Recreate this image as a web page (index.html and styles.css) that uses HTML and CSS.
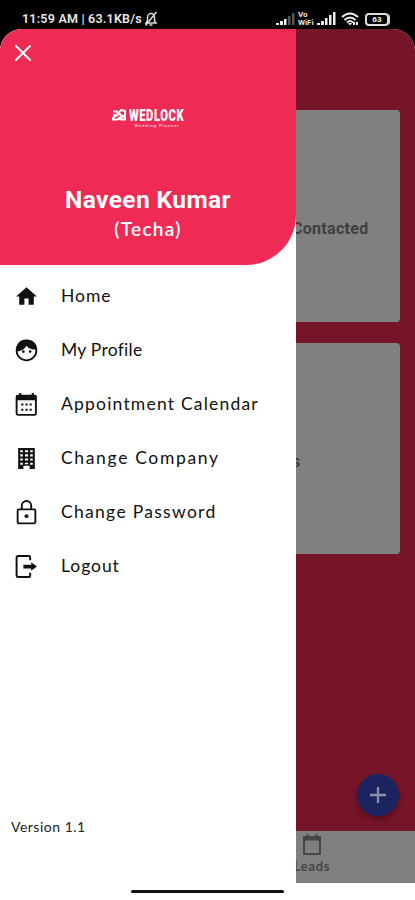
FILE: index.html
```
<!DOCTYPE html>
<html lang="en">
<head>
    <meta charset="UTF-8">
    <meta name="viewport" content="width=device-width, initial-scale=1.0">
    <title>Wedlock</title>
    <link rel="stylesheet" href="styles.css">
</head>
<body>
    <div class="status-bar">
        <span class="status-time">11:59 AM | 63.1KB/s</span>
        <svg class="bell" viewBox="0 0 14 16" width="14" height="16" fill="none" stroke="#ddd" stroke-width="1.5">
            <path d="M2 12h10l-1.5-2V6.500a3.500 4 0 0 0-7 0V10zM5.500 14h3M12.500 1L1.500 14.500"/>
        </svg>
        <div class="status-icons">
            <svg viewBox="0 0 19 14" width="19" height="14" fill="#eee">
                <path d="M0 11h3v2H0zM4 9h3v4H4zM8 7h2.500v6H8z"/>
                <path fill="#555" d="M12 4h2.500v9H12zM16 1h2.500v12H16z"/>
            </svg>
            <span class="vowifi">Vo<br>WiFi</span>
            <svg viewBox="0 0 19 14" width="19" height="14" fill="#eee">
                <path d="M0 11h3v2H0zM4 9h3v4H4zM8 6h2.500v7H8zM12 3h2.500v10H12zM16 0h2.500v13H16z"/>
            </svg>
            <svg class="wifi" viewBox="0 0 18 14" width="18" height="14" fill="none" stroke="#eee" stroke-width="2">
                <path d="M1 5q8-7 16 0M3.500 8q5.500-5 11 0M6 10.500q3-3 6 0"/>
                <path fill="#eee" stroke="none" d="M7 11h4l-2 2.500zM12 10h2v3h-2zM15 10h2v3h-2z"/>
            </svg>
            <div class="battery">63</div>
        </div>
    </div>

    <div class="screen">
        <div class="page">
            <div class="page-header"></div>
            <div class="cards">
                <div class="card"><span class="contacted">Contacted</span></div>
                <div class="card"><span class="card-end">s</span></div>
            </div>
            <div class="fab">
                <svg viewBox="0 0 16 16" width="16" height="16" stroke="#8c8fa5" stroke-width="2.300"><path d="M8 0v16M0 8h16"/></svg>
            </div>
            <div class="bottom-nav">
                <div class="nav-item">
                    <svg viewBox="0 0 18 21" width="18" height="21" fill="none" stroke="#454545" stroke-width="2">
                        <path d="M1 3h16v17H1z"/>
                        <path d="M1 4.500h16" stroke-width="4"/>
                        <path d="M4.500 0v4M13.500 0v4"/>
                    </svg>
                    <span>Leads</span>
                </div>
            </div>
        </div>

        <div class="drawer">
            <div class="drawer-header">
                <svg class="close" viewBox="0 0 16 16" width="16" height="16" stroke="#fff" stroke-width="2" stroke-linecap="round"><path d="M1 1l14 14M15 1L1 15"/></svg>
                <div class="logo">
                    <svg viewBox="0 0 14 12" width="14" height="12" fill="none" stroke="#fff" stroke-width="2">
                        <path d="M1 2.500h4l1 3-5 3v2h4.500l7.500-4V2L9 1 7 3.500l2 3 4 1v3H9L6.500 8M1 6h3"/>
                    </svg>
                    <div class="logo-text">
                        <div class="logo-name"><span>WEDLOCK</span></div>
                        <div class="logo-tag">Wedding Planner</div>
                    </div>
                </div>
                <div class="user-name">Naveen Kumar</div>
                <div class="user-role">(Techa)</div>
            </div>

            <div class="menu">
                <div class="menu-item">
                    <svg viewBox="0 0 24 24" width="25" height="25"><path d="M10 20v-6h4v6h5v-8h3L12 3 2 12h3v8z"/></svg>
                    <span>Home</span>
                </div>
                <div class="menu-item">
                    <svg viewBox="0 0 24 24" width="25" height="25">
                        <circle cx="12" cy="12" r="9.500" fill="none" stroke="#111" stroke-width="1.700"/>
                        <path d="M2.500 13C1 6 6 1.500 12 1.500S23 6 21.500 11c-4 .5-7.500-.5-9.500-3.500C10 11 6.500 13 2.500 13z"/>
                        <circle cx="9" cy="13" r="1.300"/><circle cx="15.500" cy="13" r="1.300"/>
                    </svg>
                    <span class="profile">My Profile</span>
                </div>
                <div class="menu-item">
                    <svg viewBox="0 0 24 24" width="25" height="25">
                        <rect x="2.500" y="3.500" width="18.500" height="18.500" rx="1.500" fill="none" stroke="#111" stroke-width="1.800"/>
                        <path d="M2 3h19.500v5H2zM5 1h2v4H5zM17 1h2v4h-2zM7 11h2v2H7zM11 11h2v2h-2zM15 11h2v2h-2zM7 16h2v2H7zM11 16h2v2h-2zM15 16h2v2h-2z"/>
                    </svg>
                    <span class="calendar">Appointment Calendar</span>
                </div>
                <div class="menu-item">
                    <svg viewBox="0 0 24 24" width="25" height="25">
                        <path fill-rule="evenodd" d="M4 2h16v20h-5v-3H9v3H4zM6 4v2h2.500V4zM10.500 4v2h3V4zM15.500 4v2H18V4zM6 8v2h2.500V8zM10.500 8v2h3V8zM15.500 8v2H18V8zM6 12v2h2.500v-2zM10.500 12v2h3v-2zM15.500 12v2H18v-2zM6 16v2h2.500v-2zM10.500 16v1.500h3V16zM15.500 16v2H18v-2z"/>
                    </svg>
                    <span class="company">Change Company</span>
                </div>
                <div class="menu-item">
                    <svg viewBox="0 0 24 24" width="25" height="25">
                        <path d="M4.500 9h15q1 0 1 1v11q0 1.500-1.500 1.500H5Q3.500 22.500 3.500 21V10q0-1 1-1zM7.500 9V5.500a4.500 4.500 0 0 1 9 0V9" fill="none" stroke="#111" stroke-width="1.800"/>
                        <circle cx="12" cy="15.500" r="1.900"/>
                    </svg>
                    <span class="password">Change Password</span>
                </div>
                <div class="menu-item">
                    <svg viewBox="0 0 24 24" width="25" height="25">
                        <path d="M15.500 6V3q0-1-1-1H4Q2.500 2 2.500 3.500v17Q2.500 22 4 22h10.500q1 0 1-1v-3" fill="none" stroke="#111" stroke-width="1.900"/>
                        <path d="M9 10.200h7.500V8l5.500 4-5.500 4v-2.200H9z"/>
                    </svg>
                    <span>Logout</span>
                </div>
            </div>

            <div class="version">Version 1.1</div>
        </div>
    </div>
    <div class="home-bar"></div>
</body>
</html>
```
FILE: styles.css
```
* {
    box-sizing: border-box;
}

body {
    margin: 0;
    width: 415px;
    height: 900px;
    overflow: hidden;
    background: #000;
    font-family: Roboto, sans-serif;
    position: relative;
}

.status-bar {
    height: 29px;
    padding: 9px 24px 0 22px;
    display: flex;
    align-items: center;
    color: #e8e8e8;
}

.status-time {
    font-size: 12.5px;
    font-weight: 600;
    line-height: 20px;
    white-space: nowrap;
    letter-spacing: 0.22px;
}

.bell {
    margin-left: 2px;
}

.status-icons {
    margin-left: auto;
    display: flex;
    align-items: center;
}

.vowifi {
    width: 17px;
    margin: 0 2px 0 3px;
    font-size: 8px;
    font-weight: 700;
    line-height: 8px;
}

.wifi {
    margin: 0 6px 0 5px;
}

.battery {
    width: 24px;
    height: 13px;
    border: 2px solid #ddd;
    border-radius: 4px;
    font-size: 8px;
    font-weight: 900;
    line-height: 9px;
    text-align: center;
    margin-right: 2px;
    box-shadow: 2px 0 0 -1px #ddd;
}

.screen {
    display: grid;
    height: 871px;
    background: #fff;
    border-radius: 22px 22px 0 0;
    overflow: hidden;
}

.page,
.drawer {
    grid-area: 1 / 1;
    display: flex;
    flex-direction: column;
}

.page {
    height: 854px;
    background: #771528;
}

.page-header {
    height: 64px;
    border-bottom: 1px solid #701426;
}

.cards {
    padding: 17px 15px 0 223px;
    display: flex;
    flex-direction: column;
    gap: 21px;
}

.card {
    height: 212px;
    background: #808080;
    border-radius: 4px;
    display: flex;
    align-items: center;
    color: #3f3f3f;
    font-size: 16px;
    font-weight: 700;
}

.card + .card {
    height: 211px;
}

.contacted {
    margin: 24px 0 0 69px;
    letter-spacing: 0.3px;
}

.card-end {
    margin: 26px 0 0 69px;
}

.fab {
    width: 42px;
    height: 42px;
    margin: auto 16px 15px auto;
    border-radius: 50%;
    background: #1c2361;
    box-shadow: 0 3px 6px rgba(0, 0, 0, 0.35);
    display: flex;
    align-items: center;
    justify-content: center;
}

.bottom-nav {
    height: 52px;
    background: #808080;
    padding-left: 282px;
}

.nav-item {
    width: 60px;
    padding-top: 3px;
    display: flex;
    flex-direction: column;
    align-items: center;
    color: #454545;
    font-family: Lato, sans-serif;
    font-size: 13px;
    font-weight: 700;
    line-height: 22px;
    letter-spacing: 0.7px;
}

.drawer {
    width: 296px;
    background: #fff;
    z-index: 1;
}

.drawer-header {
    height: 236px;
    background: #ef2b55;
    border-radius: 0 0 50px 0;
    color: #fff;
    text-align: center;
}

.close {
    display: block;
    margin: 16px 0 0 15px;
}

.logo {
    display: flex;
    justify-content: center;
    gap: 3px;
    padding-top: 48px;
}

.logo-text {
    width: 56px;
}

.logo-name {
    height: 14px;
    font-size: 16px;
    font-weight: 900;
    line-height: 14px;
}

.logo-name span {
    display: block;
    transform: scaleX(0.7);
    transform-origin: left;
    letter-spacing: 0.8px;
}

.logo-tag {
    margin-top: 1px;
    font-size: 4px;
    line-height: 4px;
    letter-spacing: 1px;
    white-space: nowrap;
    text-align: left;
    padding-left: 6px;
}

.user-name {
    margin-top: 57px;
    font-size: 24.5px;
    font-weight: 700;
    line-height: 30px;
    letter-spacing: 0.4px;
}

.user-role {
    font-family: Lato, sans-serif;
    font-size: 19px;
    font-weight: 600;
    line-height: 27px;
    letter-spacing: 1.3px;
}

.menu {
    padding: 5px 0 0 14px;
}

.menu-item {
    height: 53.9px;
    display: flex;
    align-items: center;
    gap: 22px;
    color: #111;
    font-family: Lato, sans-serif;
    font-size: 17.5px;
    line-height: 24px;
    white-space: nowrap;
}

.menu-item svg {
    fill: #111;
    flex-shrink: 0;
}

.menu-item span {
    letter-spacing: 0.95px;
    margin-bottom: 1px;
}

.menu-item .profile {
    letter-spacing: 0.25px;
}

.menu-item .calendar {
    letter-spacing: 1.2px;
}

.menu-item .company {
    letter-spacing: 1.65px;
}

.menu-item .password {
    letter-spacing: 1.3px;
}

.version {
    margin: auto 0 61px 11px;
    color: #222;
    font-family: Lato, sans-serif;
    font-size: 14px;
    line-height: 24px;
    letter-spacing: 0.5px;
}

/* gesture bar lies over both the drawer and the page */
.home-bar {
    position: absolute;
    left: 131px;
    bottom: 7px;
    width: 153px;
    height: 3px;
    border-radius: 2px;
    background: #111;
    z-index: 2;
}
```
